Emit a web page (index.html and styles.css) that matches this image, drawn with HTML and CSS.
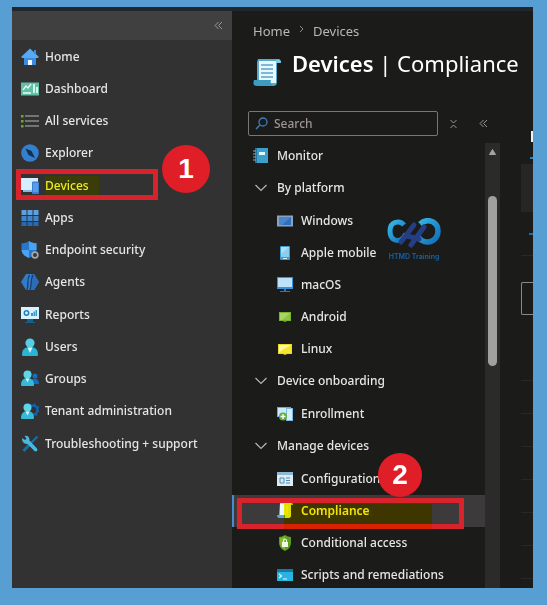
FILE: index.html
```html
<!DOCTYPE html>
<html lang="en">
<head>
<meta charset="utf-8">
<title>Devices | Compliance</title>
<link rel="stylesheet" href="styles.css">
</head>
<body>
<div class="window">
  <nav class="sidebar" aria-label="Main">
    <div class="sidebar-head">
      <button class="icon-button" aria-label="Collapse menu"><svg width="9" height="9" viewBox="0 0 9 9"><path d="M4.5 1 1 4.500l3.500 3.500M8 1 4.500 4.500 8 8" fill="none" stroke="currentColor"/></svg></button>
    </div>
    <ul class="menu">
      <li><a class="row" href="#"><svg class="icon" viewBox="0 0 18 18"><path d="M3 8h12v9H3z" fill="#3b8be0"/><path d="M9 .5 18 9l-1.500 1H1.500L0 9z" fill="#58a9f4"/><path d="M13 2h2v4h-2z" fill="#3b8be0"/><path d="M7 12h4v5H7z" fill="#f0f7ff"/></svg>Home</a></li>
      <li><a class="row" href="#"><svg class="icon" viewBox="0 0 18 18"><path d="M0 2.500h18v13H0z" fill="#62bfa5"/><path d="M2 10l3-4 2 2 3-4M2 13h8" fill="none" stroke="#e2fff5" stroke-width="1.300"/><path d="M12 4h2v9h-2zM15 7h2v6h-2z" fill="#d2f8ea"/></svg>Dashboard</a></li>
      <li><a class="row" href="#"><svg class="icon" viewBox="0 0 18 18"><path d="M4 4h14M4 9h14M4 14h14" stroke="#8b8b8b" stroke-width="1.500"/><path d="M0 3h2.500v2.500H0zM0 8h2.500v2.500H0zM0 13h2.500v2.500H0z" fill="#69a832"/></svg>All services</a></li>
      <li><a class="row" href="#"><svg class="icon" viewBox="0 0 18 18"><circle cx="9" cy="9" r="8.800" fill="#347fce"/><path d="M4.500 4.500l6 2.500 3.500 7-6.500-3z" fill="#142f50"/></svg>Explorer</a></li>
      <li class="marked"><a class="row" href="#"><svg class="icon" viewBox="0 0 18 18"><path d="M0 1h17v12H0z" fill="#d6ecff"/><path d="M2 13h9v2H2z" fill="#82b7ea"/><rect x="11" y="4.500" width="7" height="12.500" rx="1" fill="#3a7fd2"/><path d="M12 6h5v9h-5z" fill="#5a9de6"/></svg><span class="highlight">Devices</span></a><span class="frame frame-devices"></span><span class="badge badge-one">1</span></li>
      <li><a class="row" href="#"><svg class="icon" viewBox="0 0 18 18"><path d="M.5 1h5v5h-5zM6.500 1h5v5h-5zM12.500 1h5v5h-5z" fill="#5e9fdd"/><path d="M.5 7h5v5h-5zM6.500 7h5v5h-5zM12.500 7h5v5h-5z" fill="#3f83ca"/><path d="M.5 13h5v4h-5zM6.500 13h5v4h-5zM12.500 13h5v4h-5z" fill="#2869b2"/></svg>Apps</a></li>
      <li><a class="row" href="#"><svg class="icon" viewBox="0 0 18 18"><path d="M8 0c2.500 2 5 2.200 7.500 2.300V8c0 4-3 7-7.500 9C3.500 15 .5 12 .5 8V2.300C3 2.200 5.500 2 8 0z" fill="#2577ca"/><path d="M8 0v9h7.500V2.300C13 2.200 10.500 2 8 0zM8 9H.5c.5 4 3 6 7.500 8z" fill="#4ba2ee"/><circle cx="14" cy="14" r="2.800" fill="#34383d" stroke="#a3a7aa" stroke-width="1.700"/></svg>Endpoint security</a></li>
      <li><a class="row" href="#"><svg class="icon" viewBox="0 0 18 18"><path d="M5 1h8l5 8-5 8H5L0 9z" fill="#347ac8"/><path d="M10 1h3l5 8-5 8h-3z" fill="#2c6dbb"/><path d="M6 17c2-5-.5-10 2.500-15M9 17c2-5 0-10 3-15" fill="none" stroke="#173a66" stroke-width="1.200"/></svg>Agents</a></li>
      <li><a class="row" href="#"><svg class="icon" viewBox="0 0 18 18"><path d="M6 13h6v3h2v1H4v-1h2z" fill="#15618c"/><path d="M0 1h18v12H0z" fill="#d8f3ff"/><circle cx="5.500" cy="7" r="2.200" fill="none" stroke="#237fba" stroke-width="1.500"/><path d="M10 7h2v3h-2zM12.500 5.500h1.500V10h-1.500zM14.500 4H16v6h-1.500z" fill="#3b99c9"/></svg>Reports</a></li>
      <li><a class="row" href="#"><svg class="icon" viewBox="0 0 18 18"><path d="M1 17c0-5 2-8 8-8s8 3 8 8q0 1-1 1H2q-1 0-1-1z" fill="#2bb5d4"/><circle cx="9" cy="5" r="4.600" fill="#55cfe6"/><path d="M6.500 9.500h5L9 15z" fill="#d5f8ff"/></svg>Users</a></li>
      <li><a class="row" href="#"><svg class="icon" viewBox="0 0 18 18"><circle cx="14" cy="6" r="2.500" fill="#1271bd"/><path d="M11 9c5-1 7 1 7 5h-7z" fill="#126bc0"/><path d="M0 15c0-4 2-7 6.500-7S13 11 13 15q0 1-1 1H1q-1 0-1-1z" fill="#35bad8"/><circle cx="6.500" cy="4.500" r="4" fill="#60d4e9"/><path d="M4.500 8.500h4l-2 4z" fill="#d5f8ff"/></svg>Groups</a></li>
      <li><a class="row" href="#"><svg class="icon" viewBox="0 0 18 18"><circle cx="12" cy="8" r="4.500" fill="none" stroke="#155fac" stroke-width="2.500"/><circle cx="12" cy="8" r="6" fill="none" stroke="#155fac" stroke-width="1.500" stroke-dasharray="2 2.700"/><path d="M0 16c0-4 2-7 6.500-7S13 12 13 16q0 1-1 1H1q-1 0-1-1z" fill="#35bad8"/><circle cx="6.500" cy="5.500" r="4" fill="#60d4e9"/><path d="M4.500 9.500h4l-2 4z" fill="#d5f8ff"/></svg>Tenant administration</a></li>
      <li><a class="row" href="#"><svg class="icon" viewBox="0 0 18 18"><path d="M16.500 1.500 9 9" stroke="#1f6fa6" stroke-width="2"/><path d="M8 10l-5.500 6" stroke="#176eaa" stroke-width="3"/><path d="M1 3l3 2 1.500-1.500L3.500 1q5-1 5 4.500l7.500 8q1.500 3-2 3L6.500 9Q1 9 1 3z" fill="#48b8df"/></svg>Troubleshooting + support</a></li>
    </ul>
  </nav>

  <main class="main">
    <header class="page-head">
      <nav class="crumbs" aria-label="Breadcrumb"><a href="#">Home</a><svg width="5" height="8" viewBox="0 0 5 8"><path d="M1 1l3 3-3 3" fill="none" stroke="#8b8b8b"/></svg><a href="#">Devices</a></nav>
      <div class="title-row">
        <svg class="title-icon" viewBox="0 0 28 29"><path d="M5 1h20q3 0 3 4h-4v19q0 4-4 4H4V4z" fill="#57a9cc"/><path d="M6 3h17v22H6z" fill="#e9f7ff"/><path d="M8 7h12M8 11h12M8 15h12M8 19h12" stroke="#5ca4c6" stroke-width="1.500"/><path d="M1 22h17c-1 3 0 5 3 6H4c-4 0-4-3-3-6z" fill="#3e9bc1"/><path d="M23 2q5-2 5 3h-5z" fill="#7cc7e2"/></svg>
        <h1><b>Devices</b> | Compliance</h1>
      </div>
    </header>
    <div class="columns">
      <section class="subnav">
        <div class="tools">
          <div class="search"><svg width="13" height="13" viewBox="0 0 13 13"><circle cx="8" cy="5" r="4" fill="none" stroke="#3d7dbd" stroke-width="1.300"/><path d="M5 8 1 12" stroke="#3d7dbd" stroke-width="1.500"/></svg><input type="text" placeholder="Search" aria-label="Search"></div>
          <button class="icon-button" aria-label="Collapse all"><svg width="7" height="10" viewBox="0 0 7 10"><path d="M.5 1l3 3 3-3M.5 9l3-3 3 3" fill="none" stroke="currentColor"/></svg></button>
          <button class="icon-button" aria-label="Hide menu"><svg width="9" height="9" viewBox="0 0 9 9"><path d="M4.500 1 1 4.500l3.500 3.500M8 1 4.500 4.500 8 8" fill="none" stroke="currentColor"/></svg></button>
        </div>
        <div class="scroll">
          <div class="tree">
            <a class="row row-top" href="#"><svg class="icon" viewBox="0 0 16 16"><path d="M2 0h13v15H2z" fill="#3ba0ca"/><path d="M2 0h2v15H2z" fill="#2375a0"/><path d="M0 3h3M0 6h3M0 9h3M0 12h3" stroke="#7fb4c9"/><path d="M6 4h6v3H6z" fill="#e6f8ff"/></svg>Monitor</a>
            <button class="group"><svg class="chevron" viewBox="0 0 12 8"><path d="M.5 1 6 6.500 11.500 1" fill="none" stroke="#b5b5b5" stroke-width="1.200"/></svg>By platform</button>
            <a class="row" href="#"><svg class="icon" viewBox="0 0 16 16"><path d="M0 2.500h16v11H0z" fill="#8ba3bd"/><path d="M2 4h12v8H2z" fill="#2f6fbd"/><path d="M2 4h12L5 12H2z" fill="#4a86cc"/></svg>Windows</a>
            <a class="row" href="#"><svg class="icon" viewBox="0 0 16 16"><rect x="3" y="1" width="10" height="14" rx="1" fill="#4199d0"/><path d="M4 2h8v10H4z" fill="#89cef0"/><path d="M4 2h8L4 9z" fill="#a9dff7"/><path d="M6 13h4v1H6z" fill="#d7f0fb"/></svg>Apple mobile</a>
            <a class="row" href="#"><svg class="icon" viewBox="0 0 16 16"><path d="M0 0h16v12H0z" fill="#3a91d9"/><path d="M1 1h14v9H1z" fill="#bce2fa"/><path d="M7 12h2v2h4v1H3v-1h4z" fill="#2778c0"/></svg>macOS</a>
            <a class="row" href="#"><svg class="icon" viewBox="0 0 16 16"><path d="M2 3h12v9h-4l-2 1-2-1H2z" fill="#79b52c"/><path d="M3 4h10v7H3z" fill="#8fc443"/><path d="M3 4h10L5 11H3z" fill="#a7d568"/></svg>Android</a>
            <a class="row" href="#"><svg class="icon" viewBox="0 0 16 16"><path d="M1 3h14v10h-5l-2 1-2-1H1z" fill="#eed62c"/><path d="M2 4h12v8H2z" fill="#f7e52c"/><path d="M2 4h12L5 9 2 12z" fill="#fff6a6"/></svg>Linux</a>
            <button class="group"><svg class="chevron" viewBox="0 0 12 8"><path d="M.5 1 6 6.500 11.500 1" fill="none" stroke="#b5b5b5" stroke-width="1.200"/></svg>Device onboarding</button>
            <a class="row" href="#"><svg class="icon" viewBox="0 0 16 16"><path d="M0 1h14v10H0z" fill="#5eaee4"/><path d="M1 2h12v8H1z" fill="#c9eafd"/><path d="M9 2h7v13H9z" fill="#7abbe5"/><path d="M10 3h5v11h-5z" fill="#d7edfa"/><circle cx="6" cy="10.500" r="4" fill="#65ad31"/><path d="M6 8v5M3.500 10.500h5" stroke="#fff" stroke-width="1.300"/></svg>Enrollment</a>
            <button class="group"><svg class="chevron" viewBox="0 0 12 8"><path d="M.5 1 6 6.500 11.500 1" fill="none" stroke="#b5b5b5" stroke-width="1.200"/></svg>Manage devices</button>
            <div class="marked"><a class="row" href="#"><svg class="icon" viewBox="0 0 16 16"><path d="M0 1h16v14H0z" fill="#dfeaf2"/><path d="M0 1h16v3H0z" fill="#8db9d4"/><path d="M3 7h4v5H3zM9 7h4M9 9.500h4M9 12h4" fill="none" stroke="#4a8dbd"/></svg>Configuration</a><span class="badge badge-two">2</span></div>
            <div class="marked"><a class="row selected" href="#" aria-current="page"><svg class="icon" viewBox="0 0 16 16"><path d="M3 0h11q2 0 2 2h-2v10q0 3-3 3H2z" fill="#b9d4e5"/><path d="M3 1h5v11H3z" fill="#e9f7ff"/><path d="M0 12h8v3H2q-2 0-2-3z" fill="#58a7cd"/><path d="M8 0h6v12q0 3-3 3H8z" fill="#dced13"/><path d="M10 2v10" stroke="#fbff72"/></svg>Compliance</a><span class="marker"></span><span class="frame frame-compliance"></span></div>
            <a class="row" href="#"><svg class="icon" viewBox="0 0 16 16"><path d="M8 0q3 2 6 2v6q0 5-6 8Q2 13 2 8V2q3 0 6-2z" fill="#5f9d1d"/><path d="M8 1v14q-5-3-5-7V3q3 0 5-2z" fill="#80b931"/><path d="M5 7h6v5H5z" fill="#f0f8e5"/><path d="M6.500 7V5.500a1.500 1.500 0 0 1 3 0V7" fill="none" stroke="#f0f8e5" stroke-width="1.200"/></svg>Conditional access</a>
            <a class="row" href="#"><svg class="icon" viewBox="0 0 16 16"><path d="M0 2h16v12H0z" fill="#29b4df"/><path d="M0 2h16v3H0z" fill="#1577ae"/><path d="M2 7l2.500 2L2 11M6 12h4" fill="none" stroke="#e2faff" stroke-width="1.200"/></svg>Scripts and remediations</a>
          </div>
          <div class="track"><svg width="7" height="6" viewBox="0 0 7 6"><path d="M3.500.5 6.500 5.500H.5z" fill="#a4a4a4" stroke="#a4a4a4" stroke-linejoin="round"/></svg><span class="thumb"></span></div>
        </div>
        <figure class="logo">
          <svg viewBox="0 0 54 32"><defs><linearGradient id="ring" x2="1" y2="1"><stop stop-color="#35b6e6"/><stop offset="1" stop-color="#126eb8"/></linearGradient></defs><path d="M17 7C13 2 3 3 3 13s9 12 14 6l2-3" fill="none" stroke="url(#ring)" stroke-width="5"/><path d="M33 6C41-1 51 4 51 13s-9 14-17 9l-4-4" fill="none" stroke="url(#ring)" stroke-width="5.500"/><path d="M14 24 27 7M24 27 37 9M20 18l12 3" fill="none" stroke="#253e83" stroke-width="5" stroke-linecap="round"/></svg>
          <figcaption>HTMD Training</figcaption>
        </figure>
      </section>
      <section class="content" aria-label="Details">
        <div class="tab"></div>
        <div class="banner"></div>
        <div class="link-line"></div>
        <div class="field"></div>
        <div class="lines"></div>
      </section>
    </div>
  </main>
</div>
</body>
</html>
```
FILE: styles.css
```css
* { box-sizing: border-box; }
body {
  margin: 0;
  height: 100vh;
  padding: 7px 14px 17px 12px;
  background: #579fd2;
  color: #e6e6e6;
  font: 500 12px/16px "Noto Sans", "Open Sans", sans-serif;
}
a { color: inherit; text-decoration: none; }
button { border: 0; background: none; color: inherit; font: inherit; padding: 0; }
ul { list-style: none; margin: 0; padding: 0; }

.window {
  height: 100%;
  display: flex;
  overflow: hidden;
  border-top: 4px solid #20272f;
  background: #1b1b1a;
}
.sidebar { flex: 0 0 220px; background: #323232; }
.sidebar-head {
  display: flex;
  align-items: center;
  justify-content: flex-end;
  height: 29px;
  padding-right: 9px;
  background: #404040;
}
.icon-button { display: flex; color: #999; }
.menu { padding-top: 1px; }
.menu li:nth-child(4n) { margin-bottom: 1px; }
.row { display: flex; align-items: center; height: 32px; }
.menu .row { padding-left: 9px; gap: 6px; }
.menu .icon { width: 18px; height: 18px; }
.marked { position: relative; }

.highlight { padding: 2px 10px 2px 0; background: #3b3d08; color: #ecec20; }
.frame { position: absolute; border: 5px solid #d8232c; }
.frame-devices { left: 4px; top: -1px; width: 142px; height: 31px; }
.frame-compliance { left: 5px; top: 3px; width: 227px; height: 31px; }
.badge {
  position: absolute;
  z-index: 2;
  display: grid;
  place-items: center;
  border-radius: 50%;
  background: #e01e27;
  color: #fff;
  font: bold 28px/32px "Liberation Sans", sans-serif;
}
.badge-one { left: 150px; top: -25px; width: 48px; height: 48px; }
.badge-two { left: 146px; top: -10px; width: 44px; height: 44px; }

.main { flex: 1; min-width: 0; display: flex; flex-direction: column; }
.page-head { padding: 11px 0 0 21px; height: 100px; white-space: nowrap; }
.crumbs { display: flex; align-items: center; gap: 9px; font-size: 13px; line-height: 18px; font-weight: 400; color: #b8b8b8; }
.crumbs svg { margin-bottom: 4px; }
.title-row { display: flex; gap: 11px; margin-top: 8px; }
.title-icon { width: 28px; height: 29px; margin-top: 10px; }
h1 { margin: 0; color: #fff; font-size: 22px; line-height: 30px; font-weight: 400; }
h1 b { font-weight: 600; }

.columns { flex: 1; min-height: 0; display: flex; }
.subnav { position: relative; flex: 0 0 268px; display: flex; flex-direction: column; }
.tools { display: flex; align-items: center; gap: 22px; padding-left: 16px; color: #8b8b8b; }
.tools .search { margin-right: -10px; }
.search {
  display: flex;
  align-items: center;
  gap: 6px;
  width: 190px;
  height: 25px;
  padding: 0 6px;
  border: 1px solid #777;
  border-radius: 2px;
}
.search input { flex: 1; min-width: 0; border: 0; padding: 0; outline: 0; background: none; color: #ddd; font: inherit; }
.search input::placeholder { color: #9d9592; opacity: 1; }
.scroll { flex: 1; min-height: 0; display: flex; margin-top: 4px; overflow: hidden; }
.tree { flex: 1; min-width: 0; white-space: nowrap; }
.tree .row { padding-left: 45px; gap: 8px; }
.tree .row-top { padding-left: 21px; }
.tree .icon { width: 16px; height: 16px; }
.group { display: flex; align-items: center; gap: 10px; height: 31px; margin-bottom: 2px; padding-left: 23px; }
.chevron { width: 12px; height: 8px; }
.tree .selected {
  border-left: 2px solid #4c88cc;
  padding-left: 43px;
  background: #3d3a3c;
  color: #f4f417;
  font-weight: 600;
}
.marker {
  position: absolute;
  z-index: 1;
  left: 52px;
  top: 9px;
  width: 148px;
  height: 25px;
  background: #ffee00;
  mix-blend-mode: multiply;
}
.track { flex: 0 0 15px; display: flex; flex-direction: column; align-items: center; gap: 41px; margin-top: 3px; padding-top: 6px; background: #2b2b2c; }
.thumb { width: 9px; height: 170px; border-radius: 5px; background: #a0a0a0; }

.logo { position: absolute; left: 155px; top: 107px; width: 54px; margin: 0; text-align: center; }
.logo svg { display: block; width: 54px; height: 32px; }
.logo figcaption { padding-top: 1px; color: #1762a8; font: 600 7px/12px Inter, sans-serif; white-space: nowrap; }

.content { flex: 1; min-width: 0; display: flex; flex-direction: column; padding: 20px 0 0 21px; }
.tab { height: 28px; margin-left: 9px; border-bottom: 2px solid #2a7fbd; background: linear-gradient(#e8f4fa, #e8f4fa) right top / 2px 11px no-repeat; }
.banner { height: 48px; margin-top: 5px; background: #262626; }
.link-line { height: 44px; margin-bottom: 26px; background: linear-gradient(#1c6ea8, #1c6ea8) right 21px / 4px 2px no-repeat; border-bottom: 1px solid #292929; }
.field { height: 33px; border: 1px solid #888; border-right: 0; border-radius: 2px 0 0 2px; }
.lines { flex: 1; margin-top: 33px; background: repeating-linear-gradient(transparent 0 32px, #272727 32px 33px); }
```
